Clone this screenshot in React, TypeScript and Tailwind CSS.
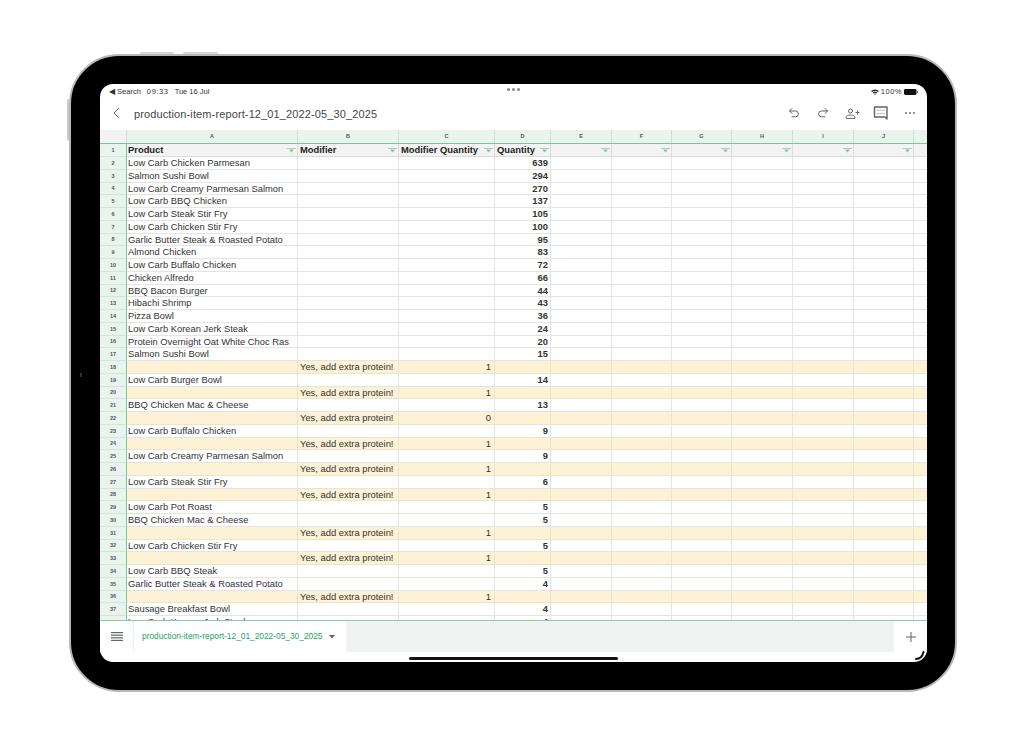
import React from "react";

const cols = ["A", "B", "C", "D", "E", "F", "G", "H", "I", "J"];
const gridCols = "grid grid-cols-[27px_171px_101px_96px_56px_61px_60px_60px_61px_61px_60px_13px]";
const YES = "Yes, add extra protein!";

type Row = { p?: string; m?: string; mq?: string; q?: string };
const y = (mq: string): Row => ({ m: YES, mq });
const r = (p: string, q: string): Row => ({ p, q });
const rows: Row[] = [
  r("Low Carb Chicken Parmesan", "639"),
  r("Salmon Sushi Bowl", "294"),
  r("Low Carb Creamy Parmesan Salmon", "270"),
  r("Low Carb BBQ Chicken", "137"),
  r("Low Carb Steak Stir Fry", "105"),
  r("Low Carb Chicken Stir Fry", "100"),
  r("Garlic Butter Steak & Roasted Potato", "95"),
  r("Almond Chicken", "83"),
  r("Low Carb Buffalo Chicken", "72"),
  r("Chicken Alfredo", "66"),
  r("BBQ Bacon Burger", "44"),
  r("Hibachi Shrimp", "43"),
  r("Pizza Bowl", "36"),
  r("Low Carb Korean Jerk Steak", "24"),
  r("Protein Overnight Oat White Choc Ras", "20"),
  r("Salmon Sushi Bowl", "15"),
  y("1"),
  r("Low Carb Burger Bowl", "14"),
  y("1"),
  r("BBQ Chicken Mac & Cheese", "13"),
  y("0"),
  r("Low Carb Buffalo Chicken", "9"),
  y("1"),
  r("Low Carb Creamy Parmesan Salmon", "9"),
  y("1"),
  r("Low Carb Steak Stir Fry", "6"),
  y("1"),
  r("Low Carb Pot Roast", "5"),
  r("BBQ Chicken Mac & Cheese", "5"),
  y("1"),
  r("Low Carb Chicken Stir Fry", "5"),
  y("1"),
  r("Low Carb BBQ Steak", "5"),
  r("Garlic Butter Steak & Roasted Potato", "4"),
  y("1"),
  r("Sausage Breakfast Bowl", "4"),
  r("Low Carb Korean Jerk Steak", "4"),
];

function Funnel() {
  return (
    <svg width="9" height="5" viewBox="0 0 9 5" className="shrink-0">
      <path d="M0 0H9V1H0Z" fill="#b5cfc2" />
      <path d="M2 1.6H7L4.5 4.6Z" fill="#8fbfa6" />
    </svg>
  );
}

function Icon({ children }: { children: React.ReactNode }) {
  return (
    <svg width="18" height="18" viewBox="0 0 18 18" fill="none" stroke="#5f6368" strokeWidth="1" strokeLinecap="round" strokeLinejoin="round">
      {children}
    </svg>
  );
}

function DataRow({ row, n }: { row: Row; n: number }) {
  const yes = !!row.m;
  const bg = yes ? "bg-[#fdf2d6]" : "bg-white";
  const line = yes ? "border-[#eee4c8]" : "border-[#e4e4e4]";
  const cell = `border-b border-r ${line} h-full overflow-hidden whitespace-nowrap`;
  return (
    <div className={`${gridCols} h-[12.75px] ${bg}`}>
      <div className="flex items-center justify-center border-b border-r border-r-[#7cc3a0] border-b-[#d5e3dc] bg-[#eaf4ef] text-[5.5px] font-bold text-[#555]">{n}</div>
      <div className={`${cell} pl-[1px] leading-[12px]`}>{row.p}</div>
      <div className={`${cell} pl-[2px] leading-[12px]`}>{row.m}</div>
      <div className={`${cell} pr-[3px] text-right leading-[12px]`}>{row.mq}</div>
      <div className={`${cell} pr-[2px] text-right font-bold leading-[12px]`}>{row.q}</div>
      {[0, 1, 2, 3, 4, 5, 6].map((i) => (
        <div key={i} className={i === 6 ? "h-full border-b " + line : cell} />
      ))}
    </div>
  );
}

export default function App() {
  return (
    <div className="h-[751px] w-[1024px] overflow-hidden bg-white pl-[69px] pt-[54px] font-['Liberation_Sans',Arial,sans-serif]">
      <div className="relative h-[638px] w-[888px] rounded-[50px] border-2 border-[#b8b8b8] bg-black p-[28px] pl-[29px]">
        {/* hardware buttons */}
        <div className="absolute left-[69px] top-[-4px] h-[2px] w-[34px] rounded-t bg-[#d4d4d4]" />
        <div className="absolute left-[112px] top-[-4px] h-[2px] w-[35px] rounded-t bg-[#d4d4d4]" />
        <div className="absolute left-[-4px] top-[43px] h-[42px] w-[2px] rounded-l bg-[#c9c9c9]" />
        <div className="absolute left-[9px] top-[317px] h-[4px] w-[2px] bg-[#333]" />

        {/* screen */}
        <div className="relative flex h-[578px] w-[827px] flex-col overflow-hidden rounded-[13px] bg-white text-[#333]">
          {/* status bar */}
          <div className="flex h-[12px] shrink-0 items-end justify-between pl-[9px] pr-[9px] text-[7.5px] leading-[8px] text-[#333]">
            <div className="flex items-center gap-[6px]">
              <span>◀ Search</span>
              <span className="tracking-[0.6px]">09:33</span>
              <span>Tue 16 Jul</span>
            </div>
            <div className="flex items-center gap-[2px]">
              <svg width="8" height="6" viewBox="0 0 8 6">
                <path d="M0 2Q4 -1 8 2L7 3Q4 1 1 3ZM1.7 3.6Q4 2 6.3 3.6L5.3 4.4Q4 3.7 2.7 4.4ZM3.2 5Q4 4.5 4.8 5L4 6Z" fill="#222" />
              </svg>
              <span className="tracking-[0.5px]">100%</span>
              <svg width="14" height="6" viewBox="0 0 14 6">
                <rect x="0" y="0" width="12.5" height="6" rx="1.4" fill="#111" />
                <rect x="13" y="2" width="1" height="2" fill="#777" />
              </svg>
            </div>
          </div>
          <div className="absolute left-[407px] top-[4px] flex gap-[2px]">
            <div className="h-[3px] w-[3px] rounded-full bg-[#888]" />
            <div className="h-[3px] w-[3px] rounded-full bg-[#888]" />
            <div className="h-[3px] w-[3px] rounded-full bg-[#888]" />
          </div>

          {/* toolbar */}
          <div className="flex h-[34px] shrink-0 items-center pl-[8px] pr-[8px]">
            <svg width="16" height="16" viewBox="0 0 16 16" fill="none" stroke="#5f6368" strokeWidth="1" strokeLinecap="round" strokeLinejoin="round">
              <path d="M10.5 3.5L6 8L10.5 12.5" />
            </svg>
            <span className="ml-[10px] pt-[2px] text-[11px] leading-[34px] tracking-[0.12px] text-[#444746]">production-item-report-12_01_2022-05_30_2025</span>
            <div className="ml-auto flex items-center gap-[11px]">
              <Icon>
                <path d="M7 4.5L4.5 7L7 9.5" />
                <path d="M4.5 7H10.5A2.9 2.9 0 0 1 10.5 12.8H7" />
              </Icon>
              <Icon>
                <path d="M11 4.5L13.5 7L11 9.5" />
                <path d="M13.5 7H7.5A2.9 2.9 0 0 0 7.5 12.8H11" />
              </Icon>
              <Icon>
                <circle cx="7.5" cy="7" r="2" />
                <path d="M3 14V13.2C3 11.8 5.3 11 7.5 11S12 11.8 12 13.2V14Z" />
                <path d="M13 8.5H16M14.5 7V10" />
              </Icon>
              <Icon>
                <path d="M2.5 3H15V15L13 13H2.5Z" strokeWidth="1.4" />
                <path d="M5 6.2H12.5M5 9.6H12.5" stroke="#a9adb1" strokeWidth="0.8" />
              </Icon>
              <svg width="18" height="18" viewBox="0 0 18 18" fill="#5f6368">
                <circle cx="5" cy="9" r="0.9" />
                <circle cx="9" cy="9" r="0.9" />
                <circle cx="13" cy="9" r="0.9" />
              </svg>
            </div>
          </div>

          {/* sheet */}
          <div className="h-[491px] shrink-0 overflow-hidden border-b border-[#8fcbab] text-[9.4px] text-[#333]">
            <div className={`${gridCols} h-[14px] border-b border-[#7cc3a0] bg-[#eaf4ef] text-[5.5px] font-bold leading-[13px] text-[#555]`}>
              <div className="border-r border-[#d9d9d9] bg-[#f3f3f3]" />
              {cols.map((c) => (
                <div key={c} className="border-r border-[#d2ddd7] text-center">{c}</div>
              ))}
              <div />
            </div>
            <div className={`${gridCols} h-[13px] bg-[#f3f3f3] font-bold text-[#222]`}>
              <div className="flex items-center justify-center border-b border-r border-r-[#7cc3a0] border-b-[#d5e3dc] bg-[#eaf4ef] text-[5.5px] text-[#555]">1</div>
              {["Product", "Modifier", "Modifier Quantity", "Quantity", "", "", "", "", "", ""].map((h, i) => (
                <div key={i} className={`flex h-full items-center justify-between overflow-hidden whitespace-nowrap border-b border-r border-[#dcdcdc] pr-[1px] ${i === 0 ? "pl-[1px]" : "pl-[2px]"}`}>
                  <span>{h}</span>
                  <Funnel />
                </div>
              ))}
              <div className="border-b border-[#dcdcdc]" />
            </div>
            {rows.map((row, i) => (
              <DataRow key={i} row={row} n={i + 2} />
            ))}
          </div>

          {/* tab bar */}
          <div className="flex h-[31px] shrink-0 items-stretch bg-[#f1f3f2]">
            <div className="flex w-[34px] items-center justify-center border-r border-[#eeeeee] bg-white">
              <svg width="12" height="9" viewBox="0 0 12 9" fill="#5a6b62">
                <rect y="0" width="12" height="1.2" />
                <rect y="2.6" width="12" height="1.2" />
                <rect y="5.2" width="12" height="1.2" />
                <rect y="7.8" width="12" height="1.2" />
              </svg>
            </div>
            <div className="flex w-[212px] items-center gap-[7px] bg-white pl-[8px] text-[8.35px] text-[#22a565]">
              <span className="whitespace-nowrap">production-item-report-12_01_2022-05_30_2025</span>
              <svg width="6" height="4" viewBox="0 0 6 4"><path d="M0 0H6L3 3.5Z" fill="#5f6368" /></svg>
            </div>
            <div className="flex-1" />
            <div className="flex w-[33px] items-center justify-center bg-white">
              <svg width="12" height="12" viewBox="0 0 12 12" stroke="#54695f" strokeWidth="1"><path d="M6 1V11M1 6H11" /></svg>
            </div>
          </div>

          {/* home indicator */}
          <div className="absolute bottom-[2.5px] left-[309px] h-[3px] w-[209px] rounded-full bg-[#111]" />
          <svg width="10" height="9" viewBox="0 0 10 9" className="absolute bottom-[2px] right-[2px]">
            <path d="M1 8Q7 8 8.5 1" fill="none" stroke="#111" strokeWidth="2" strokeLinecap="round" />
          </svg>
        </div>
      </div>
    </div>
  );
}
